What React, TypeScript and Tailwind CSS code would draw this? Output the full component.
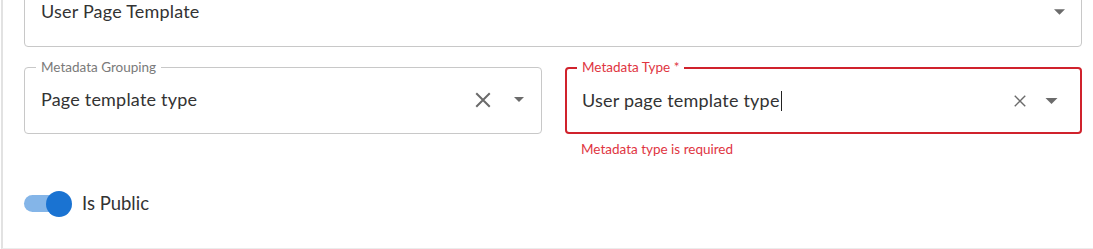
import React from "react";

const font = { fontFamily: "Lato, 'Noto Sans', sans-serif" };

function XIcon({ size, stroke }: { size: number; stroke: number }) {
  return (
    <svg width={size} height={size} viewBox="0 0 16 16" fill="none">
      <path d="M2 2 L14 14 M14 2 L2 14" stroke="#6b6b6b" strokeWidth={stroke} strokeLinecap="butt" />
    </svg>
  );
}

function Caret({ w, h }: { w: number; h: number }) {
  return (
    <svg width={w} height={h} viewBox="0 0 10 5">
      <path d="M0 0 L10 0 L5 5 Z" fill="#6b6b6b" />
    </svg>
  );
}

export default function App() {
  return (
    <div className="relative w-[1093px] h-[249px] bg-white overflow-hidden text-[#333]" style={font}>
      <div className="flex h-full border-l-2 border-[#e2e2e2] ml-[1px] border-b border-b-[#ececec] pl-[21px]">
        <div className="flex flex-col w-[1058px]">
          {/* Top select (cut off) */}
          <div className="-mt-[20px] h-[67px] border border-[#c8c8c8] rounded-[4px] flex items-center pl-[16px] pr-[16px] shrink-0">
            <span className="text-[18px] tracking-[0.2px] flex-1 mt-[-4px]">User Page Template</span>
            <span className="mt-[-3px] flex"><Caret w={11} h={6} /></span>
          </div>

          {/* Row */}
          <div className="flex gap-[23px] mt-[20px]">
            <div className="relative w-[518px] shrink-0 h-[67px] border border-[#c8c8c8] rounded-[4px] flex items-center pl-[16px]">
              <span className="absolute -top-[10px] left-[11px] bg-white px-[5px] text-[13.5px] leading-[18px] text-[#7a7a7a]">
                Metadata Grouping
              </span>
              <span className="text-[18px] tracking-[0.2px] flex-1 mt-[-2px]">Page template type</span>
              <span className="mr-[22px] mt-[-2px] flex"><XIcon size={18} stroke={1.8} /></span>
              <span className="mr-[17px] mt-[-3px] flex"><Caret w={10} h={5} /></span>
            </div>
            <div className="flex flex-col w-[517px] shrink-0">
              <div className="relative h-[67px] border-2 border-[#d0222c] rounded-[4px] flex items-center pl-[15px]">
                <span className="absolute -top-[11px] left-[10px] bg-white px-[5px] text-[13.5px] leading-[18px] text-[#e0353f]">
                  Metadata Type *
                </span>
                <span className="text-[18px] tracking-[0.2px]">User page template type</span>
                <span className="inline-block w-[1.5px] h-[20px] bg-[#222] ml-[1px]"></span>
                <span className="flex-1" />
                <span className="mr-[18px] flex"><XIcon size={14} stroke={1.6} /></span>
                <span className="mr-[22px] flex"><Caret w={13} h={6} /></span>
              </div>
              <div className="text-[13.5px] text-[#e0353f] pl-[16px] mt-[6px] leading-[18px]">Metadata type is required</div>
            </div>
          </div>

          {/* Toggle */}
          <div className="flex items-center mt-[32px]">
            <div className="relative w-[48px] h-[26px] flex items-center">
              <div className="w-[36px] h-[17px] rounded-full bg-[#84b5e8]" />
              <div className="absolute left-[22px] top-[0px] w-[26px] h-[26px] rounded-full bg-[#1a73d2]" />
            </div>
            <span className="ml-[10px] text-[18.5px] text-[#333]">Is Public</span>
          </div>
        </div>
      </div>
    </div>
  );
}
